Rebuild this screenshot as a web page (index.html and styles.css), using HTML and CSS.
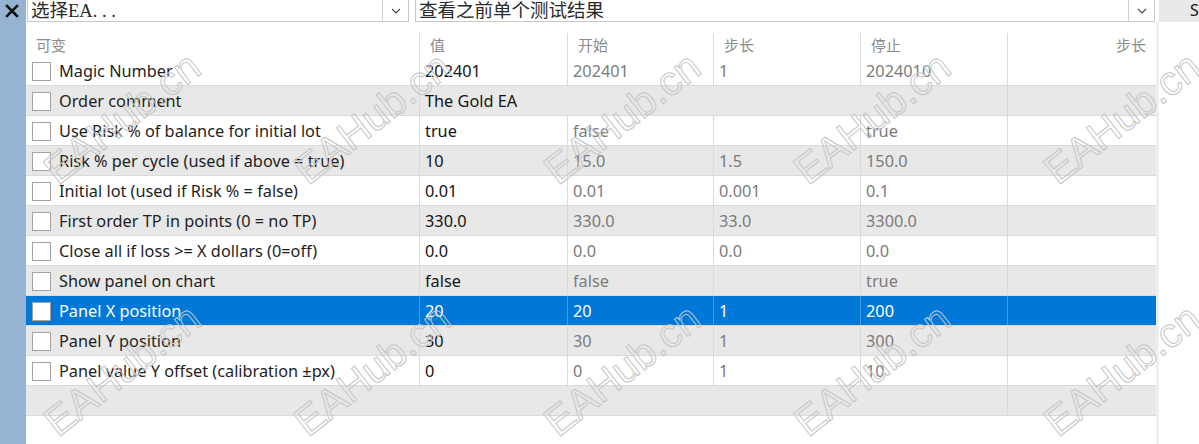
FILE: index.html
```html
<!DOCTYPE html>
<html lang="zh-CN">
<head>
    <meta charset="UTF-8">
    <title>EA 参数</title>
    <link rel="stylesheet" href="styles.css">
</head>
<body>
    <div class="side">
        <svg class="close-icon" width="14" height="14" viewBox="0 0 14 14">
            <path d="M2 2 L12 12 M12 2 L2 12" stroke="#111" stroke-width="2.6" stroke-linecap="square"/>
        </svg>
    </div>

    <div class="main">
        <div class="toolbar">
            <div class="combo combo-ea">
                <span class="combo-text">选择EA. . .</span>
                <span class="combo-btn">
                    <svg width="10" height="6" viewBox="0 0 10 6"><path d="M1 1 L5 5 L9 1" fill="none" stroke="#444" stroke-width="1.1"/></svg>
                </span>
            </div>
            <div class="combo combo-result">
                <span class="combo-text">查看之前单个测试结果</span>
                <span class="combo-btn">
                    <svg width="10" height="6" viewBox="0 0 10 6"><path d="M1 1 L5 5 L9 1" fill="none" stroke="#444" stroke-width="1.1"/></svg>
                </span>
            </div>
            <div class="start-btn">Start</div>
        </div>

        <div class="content">
            <div class="grid-wrap">
                <div class="params">
                    <div class="row head">
                        <div class="cell">可变</div>
                        <div class="cell">值</div>
                        <div class="cell">开始</div>
                        <div class="cell">步长</div>
                        <div class="cell">停止</div>
                        <div class="cell right">步长</div>
                    </div>

                    <div class="row">
                        <div class="cell name"><span class="check"></span>Magic Number</div>
                        <div class="cell val">202401</div>
                        <div class="cell dim">202401</div>
                        <div class="cell dim">1</div>
                        <div class="cell dim">2024010</div>
                        <div class="cell"></div>
                    </div>
                    <div class="row alt">
                        <div class="cell name"><span class="check"></span>Order comment</div>
                        <div class="cell val wide">The Gold EA</div>
                        <div class="cell"></div>
                    </div>
                    <div class="row">
                        <div class="cell name"><span class="check"></span>Use Risk % of balance for initial lot</div>
                        <div class="cell val">true</div>
                        <div class="cell dim">false</div>
                        <div class="cell dim"></div>
                        <div class="cell dim">true</div>
                        <div class="cell"></div>
                    </div>
                    <div class="row alt">
                        <div class="cell name"><span class="check"></span>Risk % per cycle (used if above = true)</div>
                        <div class="cell val">10</div>
                        <div class="cell dim">15.0</div>
                        <div class="cell dim">1.5</div>
                        <div class="cell dim">150.0</div>
                        <div class="cell"></div>
                    </div>
                    <div class="row">
                        <div class="cell name"><span class="check"></span>Initial lot (used if Risk % = false)</div>
                        <div class="cell val">0.01</div>
                        <div class="cell dim">0.01</div>
                        <div class="cell dim">0.001</div>
                        <div class="cell dim">0.1</div>
                        <div class="cell"></div>
                    </div>
                    <div class="row alt">
                        <div class="cell name"><span class="check"></span>First order TP in points (0 = no TP)</div>
                        <div class="cell val">330.0</div>
                        <div class="cell dim">330.0</div>
                        <div class="cell dim">33.0</div>
                        <div class="cell dim">3300.0</div>
                        <div class="cell"></div>
                    </div>
                    <div class="row">
                        <div class="cell name"><span class="check"></span>Close all if loss &gt;= X dollars (0=off)</div>
                        <div class="cell val">0.0</div>
                        <div class="cell dim">0.0</div>
                        <div class="cell dim">0.0</div>
                        <div class="cell dim">0.0</div>
                        <div class="cell"></div>
                    </div>
                    <div class="row alt">
                        <div class="cell name"><span class="check"></span>Show panel on chart</div>
                        <div class="cell val">false</div>
                        <div class="cell dim">false</div>
                        <div class="cell dim"></div>
                        <div class="cell dim">true</div>
                        <div class="cell"></div>
                    </div>
                    <div class="row selected">
                        <div class="cell name"><span class="check"></span>Panel X position</div>
                        <div class="cell val">20</div>
                        <div class="cell dim">20</div>
                        <div class="cell dim">1</div>
                        <div class="cell dim">200</div>
                        <div class="cell"></div>
                    </div>
                    <div class="row alt">
                        <div class="cell name"><span class="check"></span>Panel Y position</div>
                        <div class="cell val">30</div>
                        <div class="cell dim">30</div>
                        <div class="cell dim">1</div>
                        <div class="cell dim">300</div>
                        <div class="cell"></div>
                    </div>
                    <div class="row">
                        <div class="cell name"><span class="check"></span>Panel value Y offset (calibration ±px)</div>
                        <div class="cell val">0</div>
                        <div class="cell dim">0</div>
                        <div class="cell dim">1</div>
                        <div class="cell dim">10</div>
                        <div class="cell"></div>
                    </div>
                    <div class="row alt blank">
                        <div class="cell name wide-all"></div>
                        <div class="cell"></div>
                    </div>
                </div>
            </div>
            <div class="splitter"></div>
            <div class="side-panel"></div>
        </div>
    </div>

    <!-- site watermark laid over the whole window -->
    <div class="watermarks">
        <span>EAHub.cn</span><span>EAHub.cn</span><span>EAHub.cn</span><span>EAHub.cn</span><span>EAHub.cn</span>
        <span>EAHub.cn</span><span>EAHub.cn</span><span>EAHub.cn</span><span>EAHub.cn</span><span>EAHub.cn</span>
    </div>
</body>
</html>
```

FILE: styles.css
```css
* {
    margin: 0;
    padding: 0;
    box-sizing: border-box;
}
body {
    width: 1199px;
    height: 444px;
    overflow: hidden;
    display: flex;
    position: relative;
    background: #fff;
    font-family: "Noto Sans", "Noto Sans CJK SC", sans-serif;
    color: #1e1e1e;
}
.side {
    width: 26px;
    flex: none;
    background: #97b3d4;
    padding: 4px 0 0 5px;
}
.close-icon {
    display: block;
}
.main {
    flex: 1;
    display: flex;
    flex-direction: column;
    min-width: 0;
}

/* top bar with the two combo boxes */
.toolbar {
    height: 22px;
    display: flex;
    flex: none;
}
.combo {
    height: 23px;
    margin-top: -1px;
    border: 1px solid #c9c9c9;
    display: flex;
    align-items: center;
    background: #fff;
}
.combo-ea {
    width: 382px;
    margin-left: 1px;
}
.combo-result {
    width: 740px;
    margin-left: 6px;
}
.combo-text {
    flex: 1;
    padding-left: 3px;
    font-family: "Liberation Serif", "Noto Sans CJK SC", serif;
    font-size: 18.5px;
    color: #2a2a2a;
    line-height: 20px;
    white-space: nowrap;
}
.combo-btn {
    width: 26px;
    height: 21px;
    border-left: 1px solid #cfcfcf;
    display: flex;
    align-items: center;
    justify-content: center;
    background: #fff;
}
.start-btn {
    flex: 1;
    margin-left: 4px;
    background: #e9e9e9;
    padding-left: 31px;
    font-size: 16px;
    line-height: 20px;
    color: #111;
    overflow: hidden;
    white-space: nowrap;
}

/* parameter grid */
.content {
    flex: 1;
    display: flex;
}
.grid-wrap {
    width: 1130px;
    padding-top: 11px;
}
.splitter {
    width: 3px;
    background: #efefef;
}
.side-panel {
    flex: 1;
    background: #fff;
}
.row {
    display: grid;
    grid-template-columns: 393px 148px 146px 147px 147px 149px;
    height: 30px;
    border-bottom: 1px solid #dadada;
    font-size: 16.3px;
}
.row.alt {
    background: #e8e8e8;
}
.row.head {
    height: 23px;
    border-bottom: none;
    font-family: "Liberation Serif", "Noto Sans CJK SC", serif;
    font-size: 15px;
    color: #8c8c8c;
}
.cell {
    display: flex;
    align-items: center;
    padding-left: 5px;
    padding-top: 1px;
    white-space: nowrap;
    overflow: hidden;
    border-left: 1px solid #dadada;
}
.cell:first-child {
    border-left: none;
}
.head .cell {
    padding-left: 10px;
    padding-top: 0;
}
.head .cell.right {
    justify-content: flex-end;
    padding-right: 10px;
}
.cell.name {
    padding-left: 6px;
    color: #1e1e1e;
}
.cell.val {
    color: #141414;
}
.cell.dim {
    color: #7b7b7b;
}
.cell.wide {
    grid-column: span 4;
}
.cell.wide-all {
    grid-column: span 5;
}
.check {
    width: 19px;
    height: 19px;
    border: 1px solid #a3a3a3;
    background: #fff;
    margin-right: 8px;
    flex: none;
}
.row.selected {
    background: #0078d7;
}
.row.selected .cell {
    color: #fff;
    border-left-color: #4d9ae0;
}
.row.selected .cell:first-child {
    border-left: none;
}

/* watermark overlay */
.watermarks {
    position: absolute;
    left: -3px;
    top: -8px;
    width: 1250px;
    height: 452px;
    overflow: hidden;
    display: grid;
    grid-template-columns: repeat(5, 250px);
    grid-template-rows: 252px 252px;
    place-items: center;
    pointer-events: none;
}
.watermarks span {
    font-family: "Liberation Sans", sans-serif;
    font-size: 41px;
    color: transparent;
    -webkit-text-stroke: 1px #c6c6c6;
    transform: rotate(-38deg);
    white-space: nowrap;
}
```
